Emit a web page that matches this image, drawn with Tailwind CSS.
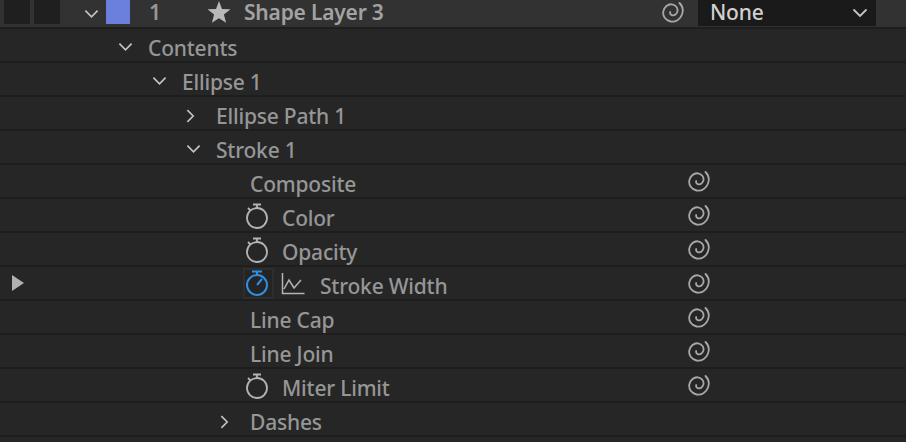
<!DOCTYPE html>
<html lang="en">
<head>
  <meta charset="UTF-8" />
  <title>Timeline</title>
  <script src="https://cdn.jsdelivr.net/npm/@tailwindcss/browser@4"></script>
</head>
<body class="bg-[#262626] text-[#969696] font-['Noto_Sans',sans-serif] font-medium text-[21px] tracking-[-0.2px] leading-[24px] h-[442px] w-[906px] overflow-hidden">
  <svg class="hidden">
    <symbol id="down" viewBox="0 0 16 10"><path d="M1.500 1.500 8 8l6.500-6.500" fill="none" stroke="#c4c4c4" stroke-width="1.800"/></symbol>
    <symbol id="right" viewBox="0 0 10 16"><path d="M1.500 1.500 8 8l-6.500 6.500" fill="none" stroke="#c4c4c4" stroke-width="1.800"/></symbol>
    <symbol id="spiral" viewBox="0 0 24 24"><path d="M18.500 3C21.500 6 22.500 10.500 21 14.500 19.300 19.500 14.500 22.500 9.500 21.500 4.500 20.500 1.500 16 2.300 11.500 3.200 7 7 3.800 11 4.300 14.800 4.800 17 8 16.500 11.200 16 14 13.500 15.800 11.200 15.300 9.500 14.900 8.800 13.400 9.200 12" fill="none" stroke="#a8a8a8" stroke-width="1.800" stroke-linecap="round"/></symbol>
    <symbol id="watch" viewBox="0 0 24 26"><circle cx="12" cy="15" r="10" fill="none" stroke="#b4b4b4" stroke-width="1.800"/><path d="M8 1.500h8M12 1.500V5M3 5l2.500 2.500" fill="none" stroke="#b4b4b4" stroke-width="1.800"/></symbol>
  </svg>

  <!-- layer row -->
  <div class="flex items-center h-[29px] bg-[#323232] border-b-2 border-[#1e1e1e]">
    <div class="w-[26px] h-6 bg-[#1f1f1f] ml-1 self-start"></div>
    <div class="w-[26px] h-6 bg-[#1f1f1f] ml-1 self-start"></div>
    <svg class="w-[15px] h-[10px] ml-6"><use href="#down"/></svg>
    <div class="w-6 h-6 bg-[#6b7fdc] ml-[7px] self-start"></div>
    <span class="ml-[19px] w-[58px] self-start font-semibold">1</span>
    <svg class="w-6 h-6 mb-[3px]" viewBox="0 0 24 24"><path d="M12 1l3 7.900 8.500.4-6.600 5.300 2.200 8.200L12 18.200l-7.100 4.600 2.200-8.200L.5 9.300 9 8.900z" fill="#b8b8b8"/></svg>
    <span class="ml-[13px] self-start font-semibold text-[#a2a2a2]">Shape Layer 3</span>
    <svg class="w-6 h-6 ml-auto mb-[3px]"><use href="#spiral"/></svg>
    <div class="w-[178px] h-[26px] bg-[#1a1a1a] ml-[13px] mr-[30px] self-start flex items-center justify-between pl-3 pr-2 text-[#d0d0d0]">
      <span class="self-start">None</span>
      <svg class="w-4 h-[10px]"><use href="#down"/></svg>
    </div>
  </div>

  <div class="flex items-center h-[34px] border-b-2 border-[#1e1e1e] pl-[118px]">
    <svg class="w-[15px] h-[10px] mt-1"><use href="#down"/></svg>
    <span class="ml-[15px] pt-[6px]">Contents</span>
  </div>
  <div class="flex items-center h-[34px] border-b-2 border-[#1e1e1e] pl-[152px]">
    <svg class="w-[15px] h-[10px] mt-1"><use href="#down"/></svg>
    <span class="ml-[15px] pt-[6px]">Ellipse 1</span>
  </div>
  <div class="flex items-center h-[34px] border-b-2 border-[#1e1e1e] pl-[186px]">
    <svg class="w-[9px] h-4 mt-[6px]"><use href="#right"/></svg>
    <span class="ml-[21px] pt-[6px]">Ellipse Path 1</span>
  </div>
  <div class="flex items-center h-[34px] border-b-2 border-[#1e1e1e] pl-[186px]">
    <svg class="w-[15px] h-[10px] mt-1"><use href="#down"/></svg>
    <span class="ml-[15px] pt-[6px]">Stroke 1</span>
  </div>

  <div class="flex items-center h-[34px] border-b-2 border-[#1e1e1e] pl-[250px] pr-[195px]">
    <span class="pt-[6px]">Composite</span>
    <svg class="w-6 h-6 ml-auto"><use href="#spiral"/></svg>
  </div>
  <div class="flex items-center h-[34px] border-b-2 border-[#1e1e1e] pl-[245px] pr-[195px]">
    <svg class="w-6 h-[26px] mt-[2px]"><use href="#watch"/></svg>
    <span class="ml-[13px] pt-[6px]">Color</span>
    <svg class="w-6 h-6 ml-auto"><use href="#spiral"/></svg>
  </div>
  <div class="flex items-center h-[34px] border-b-2 border-[#1e1e1e] pl-[245px] pr-[195px]">
    <svg class="w-6 h-[26px] mt-[2px]"><use href="#watch"/></svg>
    <span class="ml-[13px] pt-[6px]">Opacity</span>
    <svg class="w-6 h-6 ml-auto"><use href="#spiral"/></svg>
  </div>
  <div class="flex items-center h-[34px] border-b-2 border-[#1e1e1e] pl-3 pr-[195px]">
    <svg class="w-3 h-4" viewBox="0 0 12 16"><path d="M0 0 12 8 0 16z" fill="#b0b0b0"/></svg>
    <div class="ml-[219px] w-[31px] h-[31px] bg-[#242424] border-2 border-[#2e2e2e] flex items-center">
      <svg class="w-6 h-[26px] shrink-0" viewBox="0 0 24 26"><circle cx="12" cy="15" r="10" fill="none" stroke="#2f8fe0" stroke-width="2"/><path d="M7 1.500h10M12 1.500V5M12 15l5-6" fill="none" stroke="#2f8fe0" stroke-width="2"/></svg>
    </div>
    <svg class="w-[24px] h-[24px] ml-[7px] mt-[2px]" viewBox="0 0 24 24"><path d="M1.500 1v20.500h22M3 17 8 8l5 8 7-8" fill="none" stroke="#b4b4b4" stroke-width="1.500"/></svg>
    <span class="ml-[15px] pt-[6px]">Stroke Width</span>
    <svg class="w-6 h-6 ml-auto"><use href="#spiral"/></svg>
  </div>
  <div class="flex items-center h-[34px] border-b-2 border-[#1e1e1e] pl-[250px] pr-[195px]">
    <span class="pt-[6px]">Line Cap</span>
    <svg class="w-6 h-6 ml-auto"><use href="#spiral"/></svg>
  </div>
  <div class="flex items-center h-[34px] border-b-2 border-[#1e1e1e] pl-[250px] pr-[195px]">
    <span class="pt-[6px]">Line Join</span>
    <svg class="w-6 h-6 ml-auto"><use href="#spiral"/></svg>
  </div>
  <div class="flex items-center h-[34px] border-b-2 border-[#1e1e1e] pl-[245px] pr-[195px]">
    <svg class="w-6 h-[26px] mt-[2px]"><use href="#watch"/></svg>
    <span class="ml-[13px] pt-[6px]">Miter Limit</span>
    <svg class="w-6 h-6 ml-auto"><use href="#spiral"/></svg>
  </div>
  <div class="flex items-center h-[34px] border-b-2 border-[#1e1e1e] pl-[220px]">
    <svg class="w-[9px] h-4 mt-[6px]"><use href="#right"/></svg>
    <span class="ml-[21px] pt-[6px]">Dashes</span>
  </div>
</body>
</html>
